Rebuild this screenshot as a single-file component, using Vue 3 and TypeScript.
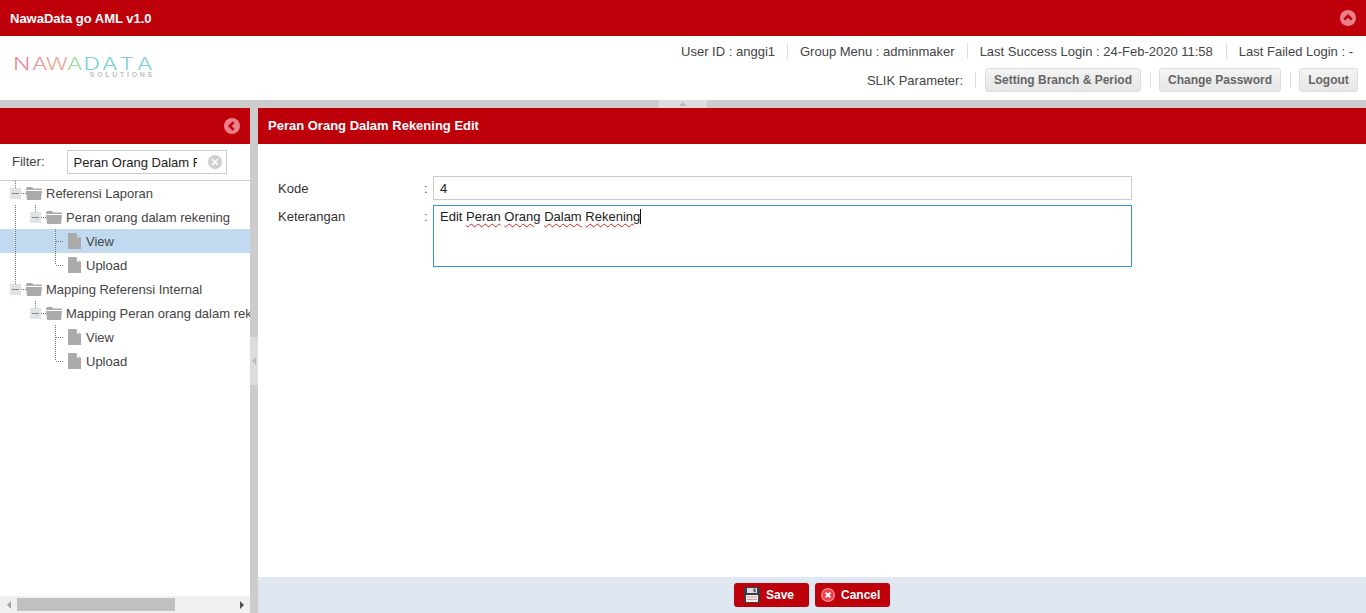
<template>
  <div class="page">
    <div class="top-bar">
      <span class="app-title">NawaData go AML v1.0</span>
      <svg class="round-icon" width="16" height="16" viewBox="0 0 16 16">
        <circle cx="8" cy="8" r="8" fill="#e9808a" />
        <path d="M4.2 9.6 8 5.8l3.8 3.8" fill="none" stroke="#be000b" stroke-width="2.6" />
      </svg>
    </div>

    <header class="head">
      <div class="logo" aria-label="NawaData Solutions">
        <div class="logo-word">
          <span v-for="(l, i) in logoLetters" :key="i" class="logo-letter" :style="{ color: l.color }">{{ l.ch }}</span>
        </div>
        <div class="logo-sub">SOLUTIONS</div>
      </div>
      <div class="head-right">
        <div class="info-row">
          <span>User ID : anggi1</span>
          <i class="sep"></i>
          <span>Group Menu : adminmaker</span>
          <i class="sep"></i>
          <span>Last Success Login : 24-Feb-2020 11:58</span>
          <i class="sep sep-last"></i>
          <span>Last Failed Login : -</span>
        </div>
        <div class="info-row action-row">
          <span>SLIK Parameter:</span>
          <i class="sep sep-first"></i>
          <button class="grey-btn btn-branch">Setting Branch &amp; Period</button>
          <i class="sep"></i>
          <button class="grey-btn btn-pass">Change Password</button>
          <i class="sep"></i>
          <button class="grey-btn btn-logout">Logout</button>
        </div>
      </div>
    </header>

    <div class="split-h"><div class="split-h-tab"><i class="tri-up"></i></div></div>

    <div class="body">
      <aside class="side">
        <div class="side-head">
          <svg class="round-icon" width="16" height="16" viewBox="0 0 16 16">
            <circle cx="8" cy="8" r="8" fill="#e9808a" />
            <path d="M9.6 4.2 5.8 8l3.8 3.8" fill="none" stroke="#be000b" stroke-width="2.6" />
          </svg>
        </div>
        <div class="filter-row">
          <label class="filter-label">Filter:</label>
          <div class="filter-box">
            <input class="filter-input" type="text" value="Peran Orang Dalam Rekening" />
            <svg class="filter-clear" width="14" height="14" viewBox="0 0 14 14">
              <circle cx="7" cy="7" r="7" fill="#cfcfcf" />
              <path d="m4 4 6 6M10 4l-6 6" stroke="#fff" stroke-width="1.6" />
            </svg>
          </div>
        </div>
        <div class="tree">
          <div v-for="row in rows" :key="row.id" class="tree-row" :class="{ selected: row.selected }">
            <svg class="tree-gfx" width="84" height="24" viewBox="0 0 84 24">
              <path :d="row.guides" fill="none" stroke="#777" stroke-dasharray="1 1" />
              <template v-if="row.folder">
                <rect :x="10 + row.level * 20" y="7" width="11" height="11" fill="#dfe3e8" />
                <path :d="`M${12 + row.level * 20} 12.5h7`" stroke="#888" />
                <path
                  :transform="`translate(${26 + row.level * 20} 6)`"
                  d="M0 2 1 0h5l1.5 1.5H16V3H0zM0 4h16l-1 9H1z"
                  fill="#aaa"
                />
              </template>
              <path
                v-else
                transform="translate(68 4)"
                fill-rule="evenodd"
                d="M0 0h8l5 5v11H0zM8.8 1.2v3.2h3.2z"
                fill="#aaa"
              />
            </svg>
            <span class="tree-label" :style="{ marginLeft: row.textX + 'px' }">{{ row.label }}</span>
          </div>
        </div>
        <div class="h-scroll">
          <div class="scroll-btn"><i class="tri-left"></i></div>
          <div class="scroll-track"><div class="scroll-thumb"></div></div>
          <div class="scroll-btn"><i class="tri-right"></i></div>
        </div>
      </aside>

      <div class="split-v"><div class="split-v-tab"><i class="tri-left-light"></i></div></div>

      <main class="main">
        <div class="main-head">Peran Orang Dalam Rekening Edit</div>
        <div class="form">
          <div class="form-row">
            <label class="form-label">Kode</label>
            <span class="colon">:</span>
            <input class="field" type="text" value="4" />
          </div>
          <div class="form-row area-row">
            <label class="form-label">Keterangan</label>
            <span class="colon">:</span>
            <div class="field-area">
              <span>Edit</span>&nbsp;<span class="typo">Peran</span>&nbsp;<span class="typo">Orang</span>&nbsp;<span class="typo">Dalam</span>&nbsp;<span class="typo caret">Rekening</span>
            </div>
          </div>
        </div>
        <div class="main-foot">
          <button class="red-btn btn-save">
            <svg width="16" height="16" viewBox="0 0 16 16">
              <rect width="16" height="16" rx="1" fill="#3c3c44" />
              <rect x="3" y="1" width="10" height="5" fill="#d8dce2" />
              <rect x="9.5" y="1.6" width="2" height="3.6" fill="#555" />
              <rect x="2" y="8" width="12" height="7" fill="#f0eeee" />
              <path d="M3 10h10M3 12.5h10" stroke="#e09a92" />
            </svg>
            Save
          </button>
          <button class="red-btn btn-cancel">
            <svg width="14" height="14" viewBox="0 0 14 14">
              <circle cx="7" cy="7" r="6.4" fill="#ef3f4a" stroke="#ff8d92" stroke-width="1.2" />
              <path d="m4.6 4.6 4.8 4.8M9.4 4.6 4.6 9.4" stroke="#fff" stroke-width="2" />
            </svg>
            Cancel
          </button>
        </div>
      </main>
    </div>
  </div>
</template>

<script setup lang="ts">
interface TreeRow {
  id: number
  level: number
  label: string
  folder: boolean
  selected?: boolean
  guides: string
  textX: number
}

const logoLetters = [
  { ch: 'N', color: '#e58aa0' },
  { ch: 'A', color: '#e89aa0' },
  { ch: 'W', color: '#eba596' },
  { ch: 'A', color: '#a5d8a0' },
  { ch: 'D', color: '#78cfd8' },
  { ch: 'A', color: '#78cfd8' },
  { ch: 'T', color: '#80cfe0' },
  { ch: 'A', color: '#80cfe0' },
]

const trunk = 'M15.5 0v24'
const rows: TreeRow[] = [
  { id: 1, level: 0, label: 'Referensi Laporan', folder: true, guides: 'M15.5 0v7M21 12.5h5', textX: 46 },
  { id: 2, level: 1, label: 'Peran orang dalam rekening', folder: true, guides: `${trunk}M35.5 0v7M41 12.5h5`, textX: 66 },
  { id: 3, level: 2, label: 'View', folder: false, selected: true, guides: `${trunk}M55.5 0v24M56 12.5h8`, textX: 86 },
  { id: 4, level: 2, label: 'Upload', folder: false, guides: `${trunk}M55.5 0v12M56 12.5h8`, textX: 86 },
  { id: 5, level: 0, label: 'Mapping Referensi Internal', folder: true, guides: 'M15.5 0v7M21 12.5h5', textX: 46 },
  { id: 6, level: 1, label: 'Mapping Peran orang dalam rekening', folder: true, guides: 'M35.5 0v7M41 12.5h5', textX: 66 },
  { id: 7, level: 2, label: 'View', folder: false, guides: 'M55.5 0v24M56 12.5h8', textX: 86 },
  { id: 8, level: 2, label: 'Upload', folder: false, guides: 'M55.5 0v12M56 12.5h8', textX: 86 },
]
</script>

<style>
html,
body {
  margin: 0;
  overflow: hidden;
}
</style>

<style scoped>
.page {
  display: flex;
  flex-direction: column;
  width: 1366px;
  height: 613px;
  font-family: "Liberation Sans", Arial, sans-serif;
  font-size: 13px;
  color: #444;
  background: #fff;
}

.top-bar {
  flex: 0 0 36px;
  display: flex;
  align-items: center;
  justify-content: space-between;
  padding: 0 10px;
  background: #be000b;
}

.app-title {
  color: #fff;
  font-size: 13px;
  font-weight: bold;
}

.round-icon {
  display: block;
}

.head {
  flex: 0 0 64px;
  display: flex;
  justify-content: space-between;
}

.logo {
  display: flex;
  flex-direction: column;
  align-items: flex-end;
  align-self: flex-start;
  margin: 22px 0 0 13px;
  width: 140px;
}

.logo-word {
  display: flex;
  justify-content: space-between;
  width: 100%;
  font-family: Inter, sans-serif;
  font-weight: 300;
  font-size: 17px;
  line-height: 13px;
}

.logo-letter {
  display: block;
  width: 17.5px;
  text-align: center;
  transform: scaleX(1.35);
}

.logo-sub {
  font-size: 7px;
  font-weight: bold;
  letter-spacing: 2.7px;
  margin-right: -2px;
  line-height: 8px;
  color: #c0c0c0;
}

.head-right {
  display: flex;
  flex-direction: column;
  align-items: flex-end;
  padding: 7px 8px 0 0;
}

.info-row {
  display: flex;
  align-items: center;
  height: 16px;
  gap: 12px;
  padding-right: 5px;
}

.sep-last {
  margin-left: 1px;
}

.action-row {
  height: 24px;
  margin-top: 9px;
  gap: 9px;
  padding-right: 0;
}

.sep {
  width: 1px;
  height: 16px;
  background: #ddd;
}

.action-row .sep {
  margin-right: -1px;
}

.action-row .sep-first {
  margin-left: 3px;
  margin-right: 0;
}

.grey-btn {
  height: 24px;
  padding: 0;
  border: 1px solid #ddd;
  border-radius: 3px;
  background: linear-gradient(#f4f4f4, #e6e6e6);
  color: #666;
  font-family: inherit;
  font-size: 12px;
  font-weight: bold;
}

.btn-branch {
  width: 156px;
}

.btn-pass {
  width: 122px;
}

.btn-logout {
  width: 59px;
}

.split-h {
  flex: 0 0 8px;
  display: flex;
  justify-content: center;
  background: #ccc;
}

.split-h-tab {
  display: flex;
  align-items: center;
  justify-content: center;
  width: 48px;
  background: #ddd;
}

.tri-up {
  border: 4px solid transparent;
  border-top: 0;
  border-bottom: 4px solid #bbb;
}

.body {
  flex: 1;
  display: flex;
  min-height: 0;
}

.side {
  flex: 0 0 250px;
  display: flex;
  flex-direction: column;
  min-width: 0;
}

.side-head {
  flex: 0 0 36px;
  display: flex;
  align-items: center;
  justify-content: flex-end;
  padding-right: 10px;
  background: #be000b;
}

.filter-row {
  flex: 0 0 37px;
  box-sizing: border-box;
  display: flex;
  align-items: center;
  gap: 22px;
  padding: 0 0 1px 12px;
  border-bottom: 1px solid #ccc;
}

.filter-box {
  position: relative;
  display: flex;
}

.filter-input {
  box-sizing: border-box;
  width: 160px;
  height: 24px;
  padding: 1px 29px 0 6px;
  border: 1px solid #ccc;
  outline: none;
  font-family: inherit;
  font-size: 13px;
  color: #222;
}

.filter-clear {
  position: absolute;
  top: 5px;
  right: 5px;
}

.tree {
  flex: 1;
  overflow: hidden;
}

.tree-row {
  position: relative;
  height: 24px;
  line-height: 25px;
  font-size: 13px;
  white-space: nowrap;
  color: #444;
}

.tree-row.selected {
  background: #c1daf0;
}

.tree-gfx {
  position: absolute;
  left: 0;
  top: 0;
}

.tree-label {
  position: relative;
}

.h-scroll {
  flex: 0 0 17px;
  display: flex;
  background: #f0f0f0;
}

.scroll-btn {
  flex: 0 0 17px;
  display: flex;
  align-items: center;
  justify-content: center;
}

.scroll-track {
  flex: 1;
  padding-top: 2px;
}

.scroll-thumb {
  width: 158px;
  height: 13px;
  background: #c0c0c0;
}

.tri-left {
  border: 4px solid transparent;
  border-left: 0;
  border-right: 4px solid #a3a3a3;
}

.tri-right {
  border: 4px solid transparent;
  border-right: 0;
  border-left: 4px solid #505050;
}

.split-v {
  flex: 0 0 8px;
  display: flex;
  align-items: center;
  background: #ccc;
}

.split-v-tab {
  display: flex;
  align-items: center;
  justify-content: center;
  width: 8px;
  height: 48px;
  background: #ddd;
}

.tri-left-light {
  border: 4px solid transparent;
  border-left: 0;
  border-right: 4px solid #bbb;
}

.main {
  flex: 1;
  display: flex;
  flex-direction: column;
  min-width: 0;
}

.main-head {
  flex: 0 0 36px;
  padding-left: 10px;
  background: #be000b;
  color: #fff;
  font-size: 13px;
  font-weight: bold;
  line-height: 36px;
}

.form {
  flex: 1;
  padding: 32px 0 0 20px;
}

.form-row {
  display: flex;
  align-items: center;
  height: 24px;
  margin-bottom: 5px;
  font-size: 13px;
}

.area-row {
  align-items: flex-start;
  height: 62px;
  line-height: 24px;
}

.form-label {
  width: 146px;
  color: #333;
}

.colon {
  width: 9px;
  color: #555;
}

.field {
  box-sizing: border-box;
  width: 699px;
  height: 24px;
  padding: 0 6px;
  border: 1px solid #ccc;
  outline: none;
  font-family: inherit;
  font-size: 13px;
  color: #222;
}

.field-area {
  box-sizing: border-box;
  width: 699px;
  height: 62px;
  padding: 2px 6px;
  border: 1px solid #3892d3;
  line-height: 18px;
  font-size: 13px;
  color: #222;
}

.typo {
  text-decoration: underline wavy #e02020 1px;
  text-underline-offset: 2px;
}

.caret {
  border-right: 1px solid #111;
}

.main-foot {
  flex: 0 0 36px;
  display: flex;
  align-items: center;
  justify-content: center;
  gap: 6px;
  background: #dfe8f1;
}

.red-btn {
  display: flex;
  align-items: center;
  gap: 6px;
  width: 75px;
  height: 24px;
  padding: 0;
  border: 0;
  border-radius: 3px;
  background: #be000b;
  color: #fff;
  font-family: inherit;
  font-size: 12px;
  font-weight: bold;
}

.btn-save {
  padding-left: 10px;
}

.btn-cancel {
  padding-left: 6px;
}
</style>
